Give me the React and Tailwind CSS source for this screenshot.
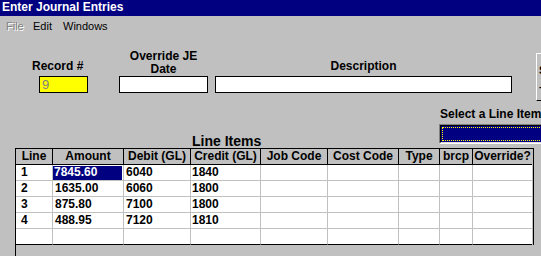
import React from 'react'

const cols = [
    { name: 'Line', w: 'w-[37px]', pad: 'pl-[5px]' },
    { name: 'Amount', w: 'w-[71px]', pad: 'pl-[2px]' },
    { name: 'Debit (GL)', w: 'w-[67px]', pad: 'pl-[2px]' },
    { name: 'Credit (GL)', w: 'w-[70px]', pad: 'pl-[1px]' },
    { name: 'Job Code', w: 'w-[67px]', pad: 'pl-[2px]' },
    { name: 'Cost Code', w: 'w-[71px]', pad: 'pl-[2px]' },
    { name: 'Type', w: 'w-[41px]', pad: 'pl-[2px]' },
    { name: 'brcp', w: 'w-[33px]', pad: 'pl-[2px]' },
    { name: 'Override?', w: 'w-[59px]', pad: 'pl-[2px]' },
]

const rows = [
    ['1', '7845.60', '6040', '1840', '', '', '', '', ''],
    ['2', '1635.00', '6060', '1800', '', '', '', '', ''],
    ['3', '875.80', '7100', '1800', '', '', '', '', ''],
    ['4', '488.95', '7120', '1810', '', '', '', '', ''],
    ['', '', '', '', '', '', '', '', ''],
]

const App = () => {
    return (
        <div className="w-[541px] h-[256px] overflow-hidden bg-[#c0c0c0] font-['Liberation_Sans',Arial,sans-serif] text-black">
            {/* title bar */}
            <div className="h-[16px] bg-[#000080] text-white text-[12px] font-bold leading-[15px] pl-[2px] whitespace-nowrap">
                Enter Journal Entries
            </div>

            {/* menu */}
            <div className="h-[20px] flex text-[11px] leading-[14px] pt-[3px] whitespace-nowrap">
                <span className="w-[33px] pl-[6px] text-[#808080] [text-shadow:1px_1px_0_#ffffff]">File</span>
                <span className="w-[30px]">Edit</span>
                <span>Windows</span>
            </div>

            {/* header fields */}
            <div className="flex items-start whitespace-nowrap">
                <div className="flex flex-col ml-[32px]">
                    <div className="h-[40px] flex flex-col justify-end pb-[3px] text-[12px] font-bold leading-[13px]">
                        Record #
                    </div>
                    <div className="ml-[7px] w-[49px] h-[17px] border border-black bg-[#ffff00] text-[13px] leading-[15px] pl-[2px] text-[#808080]">
                        9
                    </div>
                </div>
                <div className="flex flex-col ml-[31px] w-[89px]">
                    <div className="h-[40px] flex flex-col justify-end text-center text-[12px] font-bold leading-[13px]">
                        <span>Override JE</span>
                        <span>Date</span>
                    </div>
                    <div className="w-[89px] h-[17px] border border-black bg-white"></div>
                </div>
                <div className="flex flex-col ml-[7px] w-[297px]">
                    <div className="h-[40px] flex flex-col justify-end pb-[3px] text-center text-[12px] font-bold leading-[13px]">
                        Description
                    </div>
                    <div className="w-[297px] h-[17px] border border-black bg-white"></div>
                </div>
                <div className="ml-[24px] mt-[17px] w-[5px] h-[48px] shrink-0 overflow-hidden border-l border-t border-white border-b border-b-black">
                    <div className="w-[30px] text-[11px] font-bold leading-[16px] pl-[2px] pt-[8px]">
                        <div>S</div>
                        <div>-</div>
                    </div>
                </div>
            </div>

            {/* line items title + select */}
            <div className="h-[47px] flex items-end whitespace-nowrap">
                <div className="w-[439px] shrink-0 pl-[192px] text-[14px] font-bold leading-[14px]">
                    Line Items
                </div>
                <div className="w-[140px] shrink-0 flex flex-col mb-[4px]">
                    <div className="text-[12px] font-bold leading-[13px] pl-[1px]">Select a Line Item</div>
                    <div className="mt-[3px] h-[20px] border-t border-l border-[#808080] border-b border-r border-b-white border-r-white">
                        <div className="h-full border-t border-l border-black border-b border-r border-b-[#dfdfdf] border-r-[#dfdfdf] bg-[#000080] p-[1px]">
                            <div className="h-full border border-dotted border-[#ffff00]"></div>
                        </div>
                    </div>
                </div>
            </div>

            {/* grid */}
            <div className="ml-[15px] border-l border-black h-[120px]">
                <div className="w-[518px] border-t border-r border-black">
                    <div className="flex">
                        {cols.map((c, i) => (
                            <div
                                key={i}
                                className={`${c.w} h-[16px] shrink-0 bg-[#c0c0c0] border-b border-black ${i < cols.length - 1 ? 'border-r' : ''} text-center text-[12px] font-bold leading-[15px] whitespace-nowrap overflow-hidden`}>
                                {c.name}
                            </div>
                        ))}
                    </div>
                    {rows.map((r, ri) => (
                        <div className="flex" key={ri}>
                            {r.map((v, ci) => (
                                <div
                                    key={ci}
                                    className={`${cols[ci].w} h-[16px] shrink-0 bg-white border-b ${ri === rows.length - 1 ? 'border-b-black' : 'border-b-[#c0c0c0]'} ${ci < cols.length - 1 ? 'border-r border-r-[#c0c0c0]' : ''} text-[12px] font-bold leading-[15px] whitespace-nowrap overflow-hidden`}>
                                    {ri === 0 && ci === 1 ? (
                                        <div className="pt-[1px] pr-[1px] h-full">
                                            <div className="h-full bg-[#000080] text-white pl-[1px] leading-[13px]">
                                                {v}
                                            </div>
                                        </div>
                                    ) : (
                                        <div className={cols[ci].pad}>{v}</div>
                                    )}
                                </div>
                            ))}
                        </div>
                    ))}
                </div>
            </div>
        </div>
    )
}

export default App
